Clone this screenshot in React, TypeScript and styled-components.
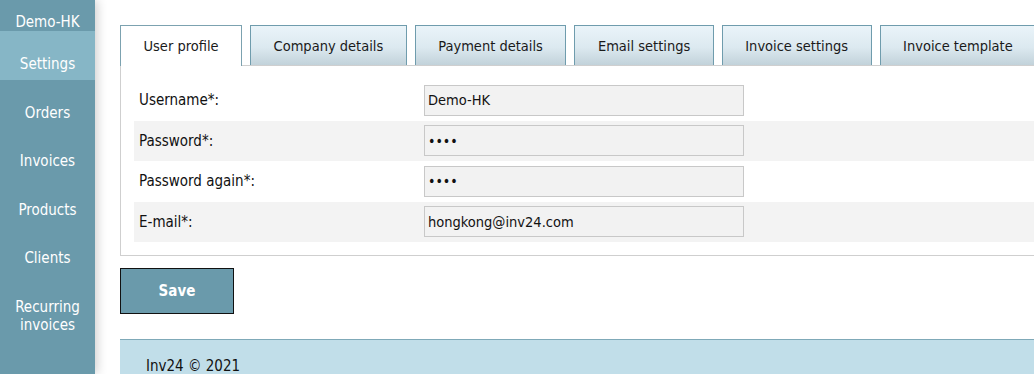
import React from 'react';
import styled, { createGlobalStyle } from 'styled-components';

const GlobalStyle = createGlobalStyle`
  html, body { margin: 0; padding: 0; background: #fff; }
  body {
    font-family: "DejaVu Sans Condensed", "DejaVu Sans", sans-serif;
    font-size: 15px;
    color: #111;
    overflow: hidden;
  }
`;

const Layout = styled.div`
  display: flex;
  width: 1034px;
  height: 374px;
  overflow: hidden;
`;

const Sidebar = styled.nav`
  width: 95px;
  flex-shrink: 0;
  background: #6a9aab;
  box-shadow: 2px 0 10px rgba(0, 0, 0, 0.2);
  display: flex;
  flex-direction: column;
  position: relative;
  z-index: 1;
`;

const UserName = styled.div`
  color: #fff;
  text-align: center;
  font-size: 15px;
  line-height: 18px;
  height: 31px;
  box-sizing: border-box;
  padding-top: 13px;
`;

const NavItem = styled.div<{ $active?: boolean }>`
  color: #fff;
  text-align: center;
  font-size: 15px;
  line-height: 18px;
  height: 48.5px;
  box-sizing: border-box;
  padding-top: 24px;
  flex-shrink: 0;
  background: ${p => (p.$active ? '#86b6c6' : 'transparent')};
`;

const Main = styled.main`
  flex: 1;
  display: flex;
  flex-direction: column;
  padding: 25px 0 0 25px;
  min-width: 0;
`;

const TabBar = styled.div`
  display: flex;
  gap: 8px;
  height: 40px;
  white-space: nowrap;
  position: relative;
  z-index: 2;
`;

const Tab = styled.div<{ $active?: boolean }>`
  flex-shrink: 0;
  height: 40px;
  box-sizing: border-box;
  padding: 0 22.5px;
  display: flex;
  align-items: center;
  font-size: 14.5px;
  border: 1px solid #6f9cad;
  border-bottom: none;
  color: #1a1a1a;
  background: ${p =>
    p.$active ? '#fff' : 'linear-gradient(to bottom, #eaf4f9 0%, #dce9f0 55%, #c2d2da 100%)'};
  ${p => p.$active && 'border-color: #7ca2b0; height: 41px;'}
`;

const Panel = styled.section`
  border: 1px solid #cfcfcf;
  border-right: none;
  padding: 14px 0 13px 13px;
  display: flex;
  flex-direction: column;
`;

const Row = styled.div<{ $shaded?: boolean }>`
  display: flex;
  align-items: center;
  height: 40.5px;
  padding-left: 5px;
  background: ${p => (p.$shaded ? '#f3f3f3' : 'transparent')};
`;

const Label = styled.label`
  width: 285px;
  flex-shrink: 0;
`;

const Field = styled.input`
  width: 320px;
  height: 31px;
  box-sizing: border-box;
  border: 1px solid #c8c8c8;
  background: #f2f2f2;
  padding: 0 3px;
  font-family: inherit;
  font-size: 14.5px;
  color: #111;
  outline: none;
  &[type='password'] {
    font-size: 14px;
  }
`;

const Actions = styled.div`
  padding: 12px 0 25px;
`;

const SaveButton = styled.button`
  width: 114px;
  height: 46px;
  background: #6a9aab;
  border: 1px solid #111;
  color: #fff;
  font-family: inherit;
  font-weight: bold;
  font-size: 15px;
`;

const Footer = styled.footer`
  background: #c1dee9;
  border-top: 1px solid #7fa9b8;
  height: 60px;
  padding: 17px 0 0 26px;
  box-sizing: border-box;
  color: #111;
`;

const tabs = ['User profile', 'Company details', 'Payment details', 'Email settings', 'Invoice settings', 'Invoice template'];

const fields = [
  { label: 'Username*:', value: 'Demo-HK', type: 'text' },
  { label: 'Password*:', value: 'demo', type: 'password' },
  { label: 'Password again*:', value: 'demo', type: 'password' },
  { label: 'E-mail*:', value: 'hongkong@inv24.com', type: 'text' },
];

export default function App() {
  return (
    <Layout>
      <GlobalStyle />
      <Sidebar>
        <UserName>Demo-HK</UserName>
        <NavItem $active>Settings</NavItem>
        <NavItem>Orders</NavItem>
        <NavItem>Invoices</NavItem>
        <NavItem>Products</NavItem>
        <NavItem>Clients</NavItem>
        <NavItem>Recurring<br />invoices</NavItem>
      </Sidebar>
      <Main>
        <TabBar>
          {tabs.map((t, i) => (
            <Tab key={t} $active={i === 0}>{t}</Tab>
          ))}
        </TabBar>
        <Panel>
          {fields.map((f, i) => (
            <Row key={f.label} $shaded={i % 2 === 1}>
              <Label>{f.label}</Label>
              <Field type={f.type} defaultValue={f.value} readOnly />
            </Row>
          ))}
        </Panel>
        <Actions>
          <SaveButton>Save</SaveButton>
        </Actions>
        <Footer>Inv24 © 2021</Footer>
      </Main>
    </Layout>
  );
}
